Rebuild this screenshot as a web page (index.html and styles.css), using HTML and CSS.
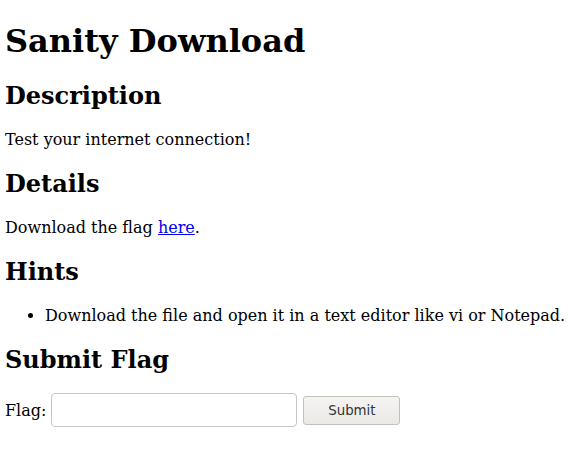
FILE: index.html
```html
<!DOCTYPE html>
<html>
<head>
<meta charset="utf-8">
<link rel="stylesheet" href="styles.css">
</head>
<body>
<h1 class="title">Sanity Download</h1>
<h2>Description</h2>
<p>Test your internet connection!</p>
<h2>Details</h2>
<p>Download the flag <a href="#">here</a>.</p>
<h2>Hints</h2>
<ul>
<li>Download the file and open it in a text editor like vi or Notepad.</li>
</ul>
<h2 class="flag-heading">Submit Flag</h2>
<form class="flag-form">
<label for="flag" class="flag-label">Flag:</label>
<input type="text" id="flag" class="flag-input">
<button type="button" class="submit-btn">Submit</button>
</form>
</body>
</html>
```
FILE: styles.css
```css
body {
  margin: 5px;
  font-family: "DejaVu Serif", serif;
  font-size: 16px;
  color: #000;
}
.title { margin-top: 17px; }
.flag-heading { margin-bottom: 19px; }
a { color: #0000ee; }
.flag-form {
  display: flex;
  align-items: flex-start;
  margin: 16px 0;
}
.flag-label { margin-top: 8px; }
.flag-input {
  width: 246px;
  height: 34px;
  box-sizing: border-box;
  border: 1px solid #c8c6c3;
  border-radius: 4px;
  margin: 0 6px 0 5px;
  background: #fff;
}
.submit-btn {
  width: 97px;
  height: 29px;
  margin-top: 3px;
  box-sizing: border-box;
  border: 1px solid #c3c0bc;
  border-radius: 3px;
  background: linear-gradient(#f5f4f2, #ebe9e6);
  font-family: "DejaVu Sans", sans-serif;
  font-size: 13.33px;
  color: #2e3436;
}
```
